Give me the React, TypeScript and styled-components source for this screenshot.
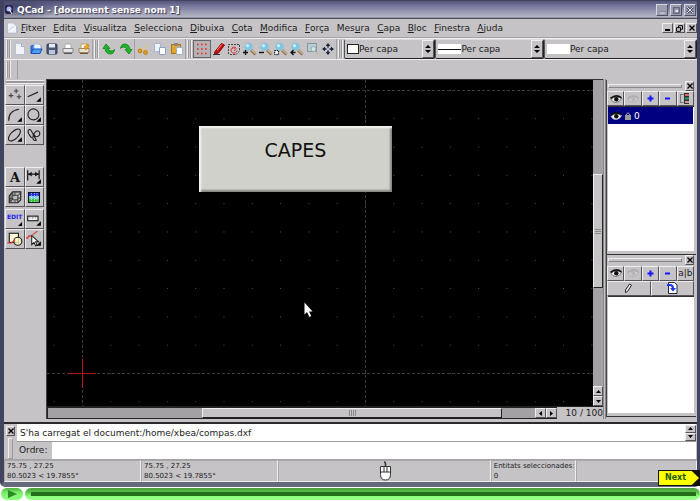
import React from "react";
import styled, { createGlobalStyle, css } from "styled-components";

const grey = "#c5c3c5";
const light = "#efeeef";
const ink = "#1c1b1e";

const GlobalStyle = createGlobalStyle`
  * { box-sizing: border-box; }
  body { margin: 0; background: #fff; }
  body, button, input, select { font-family: "DejaVu Sans", sans-serif; font-size: 9px; line-height: 12px; color: ${ink}; }
  button { padding: 0; margin: 0; border: 0; background: none; }
  svg { display: block; flex: none; }
`;

const raised = css`
  background: ${grey};
  border: 1px solid;
  border-color: ${light} #555357 #555357 ${light};
`;

const Page = styled.div`
  position: relative;
  display: flex;
  flex-direction: column;
  min-height: 100vh;
`;

const Window = styled.main`
  flex: 1;
  display: flex;
  flex-direction: column;
  background: ${grey};
  border: solid #41445e;
  border-width: 1px 3px 5px 4px;
  border-bottom-color: #66697c;
  border-radius: 0 0 5px 5px;
`;

const TitleBar = styled.header`
  display: flex;
  align-items: center;
  gap: 3px;
  height: 18px;
  padding-right: 1px;
  background: radial-gradient(ellipse 50px 14px at 14px 5px, #45466a, transparent),
    linear-gradient(#55567a, #73739a 25%, #9a9bb2 60%, #b5b7c3 90%, #4b4e62 95%);
`;

const Title = styled.h1`
  flex: 1;
  margin: 0;
  font-size: 9px;
  line-height: 14px;
  color: #fff;
  text-shadow: 1px 1px 1px #333452;
`;

const TitleButtons = styled.div`
  display: flex;
  gap: 2px;
`;

const TitleButton = styled.button`
  display: flex;
  align-items: center;
  justify-content: center;
  width: 12px;
  height: 12px;
  background: #9c9db0;
  border: 1px solid;
  border-color: #d6d7e0 #4d4f66 #4d4f66 #d6d7e0;
`;

const MenuBar = styled.nav`
  display: flex;
  align-items: center;
  justify-content: space-between;
  height: 19px;
  padding-left: 2px;
  border-bottom: 1px solid #a4a2a4;
`;

const MenuItems = styled.div`
  flex: 1;
  display: flex;
  justify-content: space-between;
  max-width: 482px;
  margin: 0 auto 0 3px;
`;

const MenuItem = styled.button`
  line-height: 14px;
  white-space: nowrap;
`;

const SmallButton = styled.button<{ $w?: number }>`
  ${raised}
  display: flex;
  flex: none;
  align-items: center;
  justify-content: center;
  width: ${(p) => p.$w ?? 10}px;
  height: 10px;
`;

const MdiButtons = styled.div`
  display: flex;
  gap: 1px;
`;

const Toolbar = styled.div<{ $h: number }>`
  display: flex;
  align-items: stretch;
  height: ${(p) => p.$h}px;
  padding-left: 1px;
  border-top: 1px solid ${light};
`;

const Grip = styled.span`
  flex: none;
  width: 5px;
  margin: 1px 1px 1px 1px;
  border: solid ${light};
  border-width: 0 1px;
  background: linear-gradient(90deg, #999799 1px, ${grey} 1px, ${grey} 2px, #999799 2px);
`;

const ToolGroup = styled.div<{ $w: number }>`
  display: flex;
  align-items: center;
  width: ${(p) => p.$w}px;
  border-right: 1px solid #a09ea0;
`;

const ToolButton = styled.button<{ $on?: boolean }>`
  flex: 1;
  display: flex;
  align-items: center;
  justify-content: center;
  height: 18px;
  ${(p) => p.$on && css`border: 1px solid #666; background: #b4b2b4;`}
`;

const Combo = styled.label<{ $grow: number }>`
  display: flex;
  flex: ${(p) => p.$grow} 1 0;
  align-items: center;
  min-width: 0;
  padding-left: 2px;
  border: 1px solid;
  border-color: #dddcdd #222 #222 #555;
  border-radius: 2px;
`;

const Select = styled.select`
  appearance: none;
  flex: 1;
  min-width: 0;
  border: 0;
  padding: 0;
  background: transparent;
`;

const Stepper = styled.span`
  ${raised}
  display: flex;
  align-self: stretch;
  align-items: center;
  justify-content: center;
  width: 12px;
`;

const Body = styled.div`
  flex: 1;
  display: flex;
  min-height: 0;
`;

const Tools = styled.aside`
  width: 42px;
  padding: 1px 2px 0 1px;
`;

const ToolsGrip = styled.div`
  height: 4px;
  margin: 0 0 1px 1px;
  border: solid ${light};
  border-width: 1px 0;
  background: #9a989a;
`;

const ToolGrid = styled.div<{ $after?: number }>`
  display: grid;
  grid-template-columns: 1fr 1fr;
  grid-auto-rows: 20px;
  margin-bottom: ${(p) => p.$after ?? 0}px;
`;

const CadTool = styled.button`
  ${raised}
  display: flex;
  align-items: center;
  justify-content: center;
`;

const Work = styled.section`
  flex: 1;
  display: flex;
  flex-direction: column;
  min-width: 0;
  border-left: 1px solid #444;
  border-top: 1px solid #333;
`;

const ViewRow = styled.div`
  flex: 1;
  display: flex;
  min-height: 0;
`;

const Canvas = styled.div`
  position: relative;
  flex: 1;
  background: #000;
  overflow: hidden;
`;

const Drawing = styled.svg`
  position: absolute;
  inset: 0;
  width: 100%;
  height: 100%;
`;

const Caption = styled.div`
  position: absolute;
  left: 152px;
  top: 46px;
  width: 193px;
  height: 66px;
  padding-top: 12px;
  text-align: center;
  font-size: 19px;
  line-height: 24px;
  color: #111;
  background: #d0d1ca;
  box-shadow: inset 2px 2px 2px #f4f4f0, inset -2px -2px 2px #85867f;
`;

const Pointer = styled.svg`
  position: absolute;
  left: 257px;
  top: 222px;
`;

const Scroll = styled.div<{ $v?: boolean }>`
  flex: ${(p) => (p.$v ? "none" : "1")};
  display: flex;
  flex-direction: ${(p) => (p.$v ? "column" : "row")};
  ${(p) => (p.$v ? "width: 10px;" : "height: 12px;")}
  background: #a3a1a3;
  border: solid #222;
  border-width: ${(p) => (p.$v ? "0" : "1px 0 1px 1px")};
`;

const Track = styled.span<{ $grow: number }>`
  flex: ${(p) => p.$grow} 1 0;
`;

const Thumb = styled.span<{ $grow: number }>`
  flex: ${(p) => p.$grow} 1 0;
  display: flex;
  align-items: center;
  justify-content: center;
  background: ${grey};
  border: 1px solid;
  border-color: ${light} #222 #222 ${light};
`;

const BottomRow = styled.div`
  display: flex;
  height: 13px;
  border-top: 1px solid #222;
`;

const Ratio = styled.span`
  width: 46px;
  text-align: right;
`;

const Docks = styled.aside`
  width: 94px;
  display: flex;
  flex-direction: column;
  padding: 1px 1px 2px 0;
  border-left: 3px double #888;
`;

const Dock = styled.section<{ $grow: number }>`
  flex: ${(p) => p.$grow} 1 0;
  display: flex;
  flex-direction: column;
  border-left: 1px solid #444;
  border-bottom: 1px solid #333;
`;

const DockHead = styled.header`
  display: flex;
  align-items: center;
  gap: 3px;
  height: 11px;
  padding: 0 2px 0 1px;
`;

const DockGrip = styled.span`
  flex: 1;
  height: 4px;
  border: 1px solid;
  border-color: ${light} #888 #888 ${light};
`;

const DockRow = styled.div<{ $cols: number }>`
  display: grid;
  grid-template-columns: repeat(${(p) => p.$cols}, 1fr);
  grid-auto-rows: 15px;
  padding-right: 2px;
`;

const List = styled.ul`
  flex: 1;
  margin: 0 2px 3px 1px;
  padding: 0;
  list-style: none;
  background: #fff;
  border-top: 1px solid #333;
`;

const Layer = styled.li`
  display: flex;
  align-items: center;
  gap: 2px;
  height: 17px;
  margin-right: 1px;
  padding-left: 2px;
  color: #fff;
  background: #000080;
`;

const Command = styled.section`
  display: flex;
  height: 37px;
  margin-top: 3px;
  border-top: 2px solid #2a292c;
`;

const CommandGrip = styled.div`
  display: flex;
  flex-direction: column;
  align-items: center;
  gap: 2px;
  width: 13px;
  padding-top: 2px;
`;

const VerticalGrip = styled.span`
  flex: 1;
  width: 5px;
  border: 1px solid;
  border-color: ${light} #999 #999 ${light};
`;

const CommandMain = styled.div`
  flex: 1;
  display: flex;
  flex-direction: column;
  padding-right: 1px;
`;

const Log = styled.div`
  display: flex;
  align-items: center;
  height: 18px;
  background: #fff;
  border-bottom: 1px solid #999;
`;

const LogText = styled.output`
  flex: 1;
  padding-left: 3px;
`;

const LogSteps = styled.div`
  display: flex;
  flex-direction: column;
  width: 11px;
`;

const StepButton = styled.button`
  ${raised}
  display: flex;
  align-items: center;
  justify-content: center;
  height: 8px;
`;

const Prompt = styled.div`
  flex: 1;
  display: flex;
  align-items: stretch;
`;

const PromptLabel = styled.label`
  width: 35px;
  padding: 2px 0 0 2px;
`;

const PromptInput = styled.input`
  flex: 1;
  min-width: 0;
  border: 0;
  padding: 0 2px;
  background: #fff;
  outline: none;
`;

const Status = styled.footer`
  display: flex;
  height: 23px;
  border-top: 1px solid #a3a1a3;
  font-size: 7px;
  line-height: 10px;
`;

const StatusCell = styled.div<{ $grow: number }>`
  flex: ${(p) => p.$grow} 1 0;
  display: flex;
  flex-direction: column;
  align-items: flex-start;
  justify-content: center;
  padding-left: 2px;
  white-space: nowrap;
  border: 1px solid;
  border-color: #aaa8aa ${light} ${light} #aaa8aa;
`;

const StatusMouse = styled(StatusCell)`
  align-items: center;
`;

const NextButton = styled.button`
  position: absolute;
  right: 0;
  bottom: 15px;
  width: 42px;
  height: 16px;
  padding: 1px;
  background: #111;
`;

const NextFace = styled.span`
  display: block;
  height: 14px;
  padding-left: 6px;
  font-size: 8px;
  line-height: 14px;
  font-weight: bold;
  text-align: left;
  color: #1c5a00;
  background: #ffff00;
  clip-path: polygon(0 0, 82% 0, 100% 50%, 82% 100%, 0 100%);
`;

const Player = styled.div`
  display: flex;
  gap: 2px;
  height: 14px;
  padding: 1px 0 1px 1px;
`;

const Play = styled.button`
  display: flex;
  align-items: center;
  justify-content: center;
  width: 22px;
  border-radius: 6px;
  background: linear-gradient(#4fb03e, #7cf06c 40%, #8fff80);
`;

const Progress = styled.div`
  flex: 1;
  padding: 4px 4px 4px 6px;
  border-radius: 6px;
  background: linear-gradient(#4c9e3c, #58b848 30%, #8cff7c 70%, #9cff8e);
`;

const ProgressLine = styled.div`
  height: 4px;
  background: #237019;
`;

type Dir = "up" | "down" | "left" | "right";
const arrows: Record<Dir, string> = {
  up: "M0 4 L2.5 1 L5 4Z",
  down: "M0 1 L2.5 4 L5 1Z",
  left: "M4 0 L1 2.5 L4 5Z",
  right: "M1 0 L4 2.5 L1 5Z",
};
const Arrow = ({ dir }: { dir: Dir }) => (
  <svg width="5" height="5"><path d={arrows[dir]} fill="#000" /></svg>
);
const Cross = () => (
  <svg width="6" height="6"><path d="M.5.5l5 5M5.5.5l-5 5" stroke="#000" strokeWidth="1.3" /></svg>
);
const UpDown = () => (
  <svg width="6" height="10"><path d="M0 4L3 1l3 3zM0 6l3 3 3-3z" fill="#000" /></svg>
);

const Icon = ({ children, size = 14 }: { children: React.ReactNode; size?: number }) => (
  <svg width={size} height={size} viewBox="0 0 14 14" fill="none" stroke="#222" aria-hidden="true">{children}</svg>
);

const Sheet = () => (
  <Icon><path d="M2.500 1.500h6l3 3v8h-9z" fill="#f1f3f9" stroke="#b9bfd0" /><path d="M8.500 1.500v3h3" fill="#dde2ee" stroke="#a5abc0" /></Icon>
);
const Lens = ({ children }: { children?: React.ReactNode }) => (
  <Icon>
    <path d="M8 8l4.500 4.500" stroke="#7b624a" strokeWidth="2.600" /><path d="M8 7.500l4.500 4.500" stroke="#d8b287" strokeWidth="1.400" />
    <circle cx="5.500" cy="4.700" r="3.800" fill="#78c9ec" stroke="#9dbccb" /><circle cx="4.500" cy="3.700" r="1.600" fill="#c8efff" stroke="none" />
    {children}
  </Icon>
);
const Eye = ({ off, onDark }: { off?: boolean; onDark?: boolean }) => (
  <svg width="12" height="10" viewBox="0 0 12 10" fill="none">
    <path d="M1 5.500Q6 .5 11.500 4.500Q10 8.500 5.500 8.500Q2.500 8.300 1 5.500Z" fill={off ? "#d2d0d2" : "#eee"} stroke={off ? "#aaa8aa" : onDark ? "#bbc" : "#555"} strokeWidth=".8" />
    <path d="M.5 4.500Q6-.5 11.500 3.800" stroke={off ? "#b0aeb0" : "#111"} strokeWidth="1.600" />
    <circle cx="6.300" cy="5.200" r="2.200" fill={off ? "#b8b6b8" : "#111"} />
  </svg>
);
const Sign = ({ minus }: { minus?: boolean }) => (
  <svg width="7" height="7"><path d={minus ? "M1 3.500h5" : "M.5 3.500h6M3.500.5v6"} stroke="#1414ff" strokeWidth="2" /></svg>
);
const Corner = () => <path d="M13 9v4H9z" fill="#000" stroke="none" />;

const fileTools: [string, React.ReactNode][] = [
  ["Nou", <Sheet />],
  ["Obre", <Icon><path d="M2 11V4l4-1 1 1.500h5v3" fill="#397fe2" stroke="#1d57b5" /><path d="M5 2h5l2 2v4H5z" fill="#e9f2ff" stroke="#9fb6d8" /><path d="M2 11.500L4 7h9l-2 4.500z" fill="#4f9cf4" stroke="#1753b8" /></Icon>],
  ["Desa", <Icon><rect x="2" y="2" width="10" height="10" rx="1" fill="#4d5872" stroke="#333c55" /><path d="M4 2h6v3.500H4z" fill="#e5ebf7" stroke="none" /><path d="M4 8h6v4H4z" fill="#b8c5dc" stroke="none" /></Icon>],
  ["Imprimeix", <Icon><path d="M4 2h6v5H4z" fill="#fff" stroke="#aaa" /><path d="M2 6.500h10v4H2z" fill="#e3e3e3" stroke="#888" /><path d="M3 11.500h8" stroke="#555" /></Icon>],
  ["Previsualitza", <Icon><path d="M4 2h6v5H4z" fill="#fff" stroke="#c59c58" /><path d="M2 6.500h10v4H2z" fill="#e7dfd0" stroke="#9b8865" /><path d="M3 11.500h8" stroke="#6f5a36" /><path d="M7 5l4-3 1 2-3 4z" fill="#f0a51d" stroke="#c98411" strokeWidth=".7" /></Icon>],
];
const undoTools: [string, React.ReactNode][] = [
  ["Desfés", <Icon><path d="M1 6.500L4 2l4 4.500-2.300-.2Q6.500 9 9 9q2.300 0 3.500-1.500Q12 12 8 12 3.500 11.500 3 6.500z" fill="#22b52c" stroke="#0b8216" strokeWidth=".8" /></Icon>],
  ["Refés", <Icon><path d="M13 7.500L10 12 6 7.500l2.300.2Q7.500 5 5 5 2.700 5 1.500 6.500 2 2 6 2q4.500.5 5 5.500z" fill="#22b52c" stroke="#0b8216" strokeWidth=".8" /></Icon>],
];
const clipTools: [string, React.ReactNode][] = [
  ["Retalla", <Icon><path d="M9.500 2.500v6M4 5.500l6 4" stroke="#e1c28a" strokeWidth="1.300" /><circle cx="4" cy="9" r="1.900" fill="#e3a22b" stroke="#b97b10" /><circle cx="9.500" cy="10.500" r="1.900" fill="#e3a22b" stroke="#b97b10" /></Icon>],
  ["Copia", <Icon><path d="M1.500 1.500h6v8h-6z" fill="#eef2fa" stroke="#a9b4ca" /><path d="M6.500 5.500h6v7h-6z" fill="#fff" stroke="#8ea2c8" /></Icon>],
  ["Enganxa", <Icon><rect x="1.500" y="2.500" width="9" height="9" fill="#dfa62f" stroke="#a8761a" /><path d="M4 1h4v3H4z" fill="#888" stroke="none" /><path d="M6.500 5.500h6v7h-6z" fill="#fff" stroke="#9fb0cf" /></Icon>],
];
const viewTools: [string, React.ReactNode][] = [
  ["Graella", <Icon><path d="M2 2.500h11M2 7h11M2 11.500h11" stroke="#e22" strokeWidth="1.600" strokeDasharray="1.600 2.400" /></Icon>],
  ["Esborrany", <Icon><path d="M3 9.500L9.500 1.500l3 1.500L6.500 11l-4 1z" fill="#c51414" stroke="#8b0a0a" /><path d="M5 8l5-5.500" stroke="#ff8a80" /><path d="M1 12.500h7" stroke="#333" /></Icon>],
  ["Redibuixa", <Icon><path d="M1.500 12V2.500H12.500V9L9 12.500H2" stroke="#444" strokeDasharray="2 1" /><path d="M9.500 6.500a3 3 0 1 0 .5 2M5 6.500q1.500-1.500 3 0t-1 2.500" stroke="#d33" /></Icon>],
  ["Amplia", <Lens><path d="M0 10.500h5M2.500 8v5" stroke="#111" strokeWidth="1.400" /></Lens>],
  ["Redueix", <Lens><path d="M0 10.500h5" stroke="#111" strokeWidth="1.400" /></Lens>],
  ["Zoom automàtic", <Lens><rect x=".6" y="8.600" width="4" height="4" fill="#eee" stroke="#111" strokeDasharray="1.500 .7" /></Lens>],
  ["Zoom previ", <Lens><path d="M5.500 10.500H1M3.500 8L1 10.500 3.500 13" stroke="#111" strokeWidth="1.300" /></Lens>],
  ["Zoom finestra", <Icon><rect x="1.500" y="1.500" width="9" height="8" fill="#b8cdd0" stroke="#82999e" /><circle cx="7.500" cy="7" r="2.500" fill="#d7e4e6" stroke="#8eaab2" /><path d="M9.500 9.500l2.500 2.500" stroke="#c5b49d" strokeWidth="1.500" /></Icon>],
  ["Desplaça", <Icon><path d="M7 1l2.300 3H4.700zM7 13l2.300-3H4.700zM1 7l3-2.300v4.600zM13 7l-3-2.300v4.600z" fill="#17213c" stroke="none" /><path d="M7 3v2.500M7 8.500V11M3 7h2.500M8.500 7H11" stroke="#17213c" strokeWidth="1.500" /></Icon>],
];

const drawTools: [string, React.ReactNode][] = [
  ["Punts", <Icon size={16}><path d="M8 1.500v4M6 3.500h4M3.500 5.500v4M1.500 7.500h4M10.500 6.500v4M8.500 8.500h4" stroke="#444" /></Icon>],
  ["Línies", <Icon size={16}><path d="M1.500 8.500L10.500 4.500" /><Corner /></Icon>],
  ["Arcs", <Icon size={16}><path d="M1.500 12Q1 3.500 10.500 2" /><Corner /></Icon>],
  ["Cercles", <Icon size={16}><circle cx="6.500" cy="6.500" r="4.800" /><Corner /></Icon>],
  ["El·lipses", <Icon size={16}><ellipse cx="6.500" cy="7" rx="6.700" ry="3.200" transform="rotate(-45 6.500 7)" /><Corner /></Icon>],
  ["Splines", <Icon size={16}><path d="M5 9.500Q1 5 2 3q1.500-2 3 1l4 7.500q-2 1-3-1.500Q6 6 8.500 4q2.500-1.500 3.500 1 .5 3-2.500 3.500-2 0-2.500-2" /></Icon>],
];
const textTools: [string, React.ReactNode][] = [
  ["Text", <svg width="16" height="16"><text x="8" y="13" textAnchor="middle" fontFamily="DejaVu Serif" fontWeight="bold" fontSize="13" fill="#111">A</text></svg>],
  ["Acotació", <Icon size={16}><path d="M1.500 1v9M11.500 1v8M2 4.500h9" stroke="#111" /><path d="M2 4.500l3-2v4zM11 4.500l-3-2v4z" fill="#111" stroke="none" /><Corner /></Icon>],
  ["Ratllat", <Icon size={16}><path d="M2 6l3-3.500h7v7L9.500 12H2z" fill="#bbb" stroke="#222" /><path d="M5 5.500h4.500v4H5zM5 3v3M2 8.500h3M9.500 6L12 3M2 11l3-2M9.500 9v3M3.500 4v8M7 3v2.500M7 10v2M9.500 8H12" stroke="#333" strokeWidth=".8" /></Icon>],
  ["Imatge", <svg width="12" height="11"><rect x=".5" y=".5" width="11" height="10" fill="#fff" stroke="#112" /><rect x="1" y="1" width="10" height="3" fill="#2233dd" /><rect x="1" y="4" width="10" height="3" fill="#79cce4" /><rect x="1" y="7" width="10" height="3" fill="#3bc13b" /><path d="M3.500 1v9M6.500 1v9M9 1v9" stroke="#fff" strokeOpacity=".6" strokeDasharray="1 1" /></svg>],
];
const editTools: [string, React.ReactNode][] = [
  ["Edició", <svg width="16" height="14"><text x="0" y="7" fontFamily="DejaVu Sans" fontSize="6" fontWeight="bold" fill="#2020f0">EDIT</text><path d="M15 10v4h-4z" fill="#000" /></svg>],
  ["Mesura", <Icon size={16}><rect x="1.500" y="4.500" width="9" height="4" fill="#eee" /><path d="M3.500 5v1M6 5v1.500M8.500 5v1" stroke="#666" strokeWidth=".7" /><Corner /></Icon>],
  ["Bloc", <Icon size={16}><rect x="2" y="2" width="8" height="8" fill="#fffdd8" /><circle cx="9.500" cy="9" r="3.500" fill="#fff9c2" fillOpacity=".8" /><path d="M0 10.500h4l3-3" stroke="#e33" /></Icon>],
  ["Selecciona entitat", <Icon size={16}><path d="M0 6l5-2 5-4M3 3.500L1 7" stroke="#d44" /><path d="M5 4v8l2-2 1.500 3 1.300-.6L8.400 9.500H11z" fill="#fff" stroke="#222" strokeWidth=".9" /><Corner /></Icon>],
];

const menus: [string, number][] = [
  ["Fitxer", 0], ["Edita", 0], ["Visualitza", 0], ["Selecciona", 0], ["Dibuixa", 0], ["Cota", 0], ["Modifica", 0],
  ["Força", 0], ["Mesura", 3], ["Capa", 0], ["Bloc", 0], ["Finestra", 0], ["Ajuda", 0],
];

const ToolButtons = ({ items, active }: { items: [string, React.ReactNode][]; active?: string }) => (
  <>{items.map(([name, icon]) => <ToolButton key={name} aria-label={name} $on={name === active}>{icon}</ToolButton>)}</>
);
const CadTools = ({ items, after }: { items: [string, React.ReactNode][]; after?: number }) => (
  <ToolGrid $after={after}>{items.map(([name, icon]) => <CadTool key={name} aria-label={name}>{icon}</CadTool>)}</ToolGrid>
);

const Choice = ({ label, grow, children }: { label: string; grow: number; children: React.ReactNode }) => (
  <Combo $grow={grow}>
    {children}
    <Select aria-label={label}><option>Per capa</option></Select>
    <Stepper><UpDown /></Stepper>
  </Combo>
);

export default function App() {
  return (
    <Page>
      <GlobalStyle />
      <Window>
        <TitleBar>
          <svg width="10" height="12"><rect x="1" y="1" width="8" height="9" rx="2" fill="#232452" /><circle cx="5" cy="5" r="2.500" fill="#aebcf2" /><path d="M5 5l3 5" stroke="#fff" /></svg>
          <Title>QCad - [document sense nom 1]</Title>
          <TitleButtons>
            <TitleButton aria-label="Minimitza"><svg width="7" height="7"><path d="M0 5h7v2H0z" fill="#e6e7ee" stroke="#55576d" strokeWidth=".6" /></svg></TitleButton>
            <TitleButton aria-label="Maximitza"><svg width="7" height="7"><rect x=".7" y=".7" width="5.600" height="5.600" fill="none" stroke="#55576d" /><rect x="2.500" y="3" width="2.500" height="2" fill="#e6e7ee" /></svg></TitleButton>
            <TitleButton aria-label="Tanca"><svg width="8" height="8"><path d="M1 1l6 6M7 1L1 7" stroke="#50526a" strokeWidth="2.800" /><path d="M1 1l6 6M7 1L1 7" stroke="#dfe0e9" /></svg></TitleButton>
          </TitleButtons>
        </TitleBar>
        <MenuBar>
          <Icon size={12}><path d="M1.500 1h7l4 4v8h-11z" fill="#f2f4fa" stroke="#a6adc0" /><path d="M3 10l6-5" stroke="#b6c2dd" /></Icon>
          <MenuItems>
            {menus.map(([name, key]) => (
              <MenuItem key={name}>{name.slice(0, key)}<u>{name[key]}</u>{name.slice(key + 1)}</MenuItem>
            ))}
          </MenuItems>
          <MdiButtons>
            <SmallButton $w={11} aria-label="Minimitza document"><svg width="5" height="6"><path d="M0 5h5" stroke="#000" strokeWidth="2" /></svg></SmallButton>
            <SmallButton $w={11} aria-label="Restaura document"><svg width="7" height="7"><path d="M2.500 2.500V.7h4v3.500H5M.5 2.700h4v3.600h-4z" fill="none" stroke="#000" /></svg></SmallButton>
            <SmallButton $w={11} aria-label="Tanca document"><Cross /></SmallButton>
          </MdiButtons>
        </MenuBar>
        <Toolbar $h={21}>
          <Grip />
          <ToolGroup $w={81}><ToolButtons items={fileTools} /></ToolGroup>
          <Grip />
          <ToolGroup $w={35}><ToolButtons items={undoTools} /></ToolGroup>
          <ToolGroup $w={51}><ToolButtons items={clipTools} /></ToolGroup>
          <Grip />
          <ToolGroup $w={144}><ToolButtons items={viewTools} active="Graella" /></ToolGroup>
          <Grip />
          <Choice label="Color" grow={88}><svg width="12" height="10"><rect x=".5" y=".5" width="11" height="9" fill="#fff" stroke="#222" /></svg></Choice>
          <Choice label="Tipus de línia" grow={105}><svg width="23" height="10"><rect width="23" height="10" fill="#fff" /><path d="M0 5.500h23" stroke="#111" /></svg></Choice>
          <Choice label="Gruix" grow={150}><svg width="23" height="10"><rect width="23" height="10" fill="#fff" /></svg></Choice>
        </Toolbar>
        <Toolbar $h={20}><Grip /><ToolGroup $w={6} /></Toolbar>
        <Body>
          <Tools>
            <ToolsGrip />
            <CadTools items={drawTools} after={22} />
            <CadTools items={textTools} after={2} />
            <CadTools items={editTools} />
          </Tools>
          <Work>
            <ViewRow>
              <Canvas>
                <Drawing>
                  <defs>
                    <pattern id="dots" x="21.300" y="279.300" width="28.300" height="28.300" patternUnits="userSpaceOnUse">
                      <path d="M13.700 14.200h1M14.200 13.700v1" stroke="#555" />
                    </pattern>
                  </defs>
                  <rect width="100%" height="100%" fill="url(#dots)" />
                  <path d="M35.500 0V900M318.500 0V900M0 10.500H2000M0 293.500H2000" stroke="#3c3c3c" strokeDasharray="3 2" />
                  <path d="M21 293.500h28M35.500 279v29" stroke="#b01818" />
                </Drawing>
                <Caption>CAPES</Caption>
                <Pointer width="9" height="16"><path d="M.5.5v12l2.500-2.500 2.500 5 1.700-1L5 9.500h3.500z" fill="#fff" /></Pointer>
              </Canvas>
              <Scroll $v>
                <Track $grow={95} />
                <Thumb $grow={112}><svg width="6" height="7"><path d="M0 1.500h6M0 3.500h6M0 5.500h6" stroke="#888" /></svg></Thumb>
                <Track $grow={99} />
                <SmallButton aria-label="Amunt"><Arrow dir="up" /></SmallButton>
                <SmallButton aria-label="Avall"><Arrow dir="down" /></SmallButton>
              </Scroll>
            </ViewRow>
            <BottomRow>
              <Scroll>
                <Track $grow={154} />
                <Thumb $grow={298}><svg width="8" height="6"><path d="M1.500 0v6M3.500 0v6M5.500 0v6M7.500 0v6" stroke="#888" /></svg></Thumb>
                <Track $grow={33} />
                <SmallButton $w={11} aria-label="Esquerra"><Arrow dir="left" /></SmallButton>
                <SmallButton $w={11} aria-label="Dreta"><Arrow dir="right" /></SmallButton>
              </Scroll>
              <Ratio>10 / 100</Ratio>
            </BottomRow>
          </Work>
          <Docks>
            <Dock $grow={175}>
              <DockHead><DockGrip /><SmallButton $w={9} aria-label="Tanca capes"><Cross /></SmallButton></DockHead>
              <DockRow $cols={5}>
                <CadTool aria-label="Mostra les capes"><Eye /></CadTool>
                <CadTool aria-label="Amaga les capes"><Eye off /></CadTool>
                <CadTool aria-label="Afegeix capa"><Sign /></CadTool>
                <CadTool aria-label="Treu capa"><Sign minus /></CadTool>
                <CadTool aria-label="Edita capa"><svg width="10" height="11"><path d="M.5 1v9M.5 1.500h3M.5 9.500h3" stroke="#777" /><rect x="4" y="0" width="5" height="11" fill="#333" /><path d="M5 2h4" stroke="#d66" strokeWidth="2" /><path d="M5 5.500h4" stroke="#2a9b62" strokeWidth="2" /><path d="M5 9h4" stroke="#c99" strokeWidth="2" /></svg></CadTool>
              </DockRow>
              <List>
                <Layer>
                  <Eye onDark />
                  <svg width="8" height="10"><path d="M2.500 5V3q1.500-2.500 3 0v2" fill="none" stroke="#aaa" /><rect x="1" y="4" width="6" height="5" fill="#999" /></svg>
                  0
                </Layer>
              </List>
            </Dock>
            <Dock $grow={162}>
              <DockHead><DockGrip /><SmallButton $w={9} aria-label="Tanca blocs"><Cross /></SmallButton></DockHead>
              <DockRow $cols={5}>
                <CadTool aria-label="Mostra els blocs"><Eye /></CadTool>
                <CadTool aria-label="Amaga els blocs"><Eye off /></CadTool>
                <CadTool aria-label="Afegeix bloc"><Sign /></CadTool>
                <CadTool aria-label="Treu bloc"><Sign minus /></CadTool>
                <CadTool>a|b</CadTool>
              </DockRow>
              <DockRow $cols={2}>
                <CadTool aria-label="Edita bloc"><svg width="9" height="11"><path d="M1.500 9.500V7L5.500 1l2 1.200L3.500 8.500z" fill="#eee" stroke="#222" /></svg></CadTool>
                <CadTool aria-label="Insereix bloc"><svg width="11" height="12"><path d="M1.500.5h6l2.500 2.500v8.500H1.500z" fill="#fff" stroke="#224" /><path d="M0 3h3q3 0 3 3.500" fill="none" stroke="#1a34e8" strokeWidth="2" /><path d="M3 6h6L6 9.500z" fill="#1a34e8" /></svg></CadTool>
              </DockRow>
              <List />
            </Dock>
          </Docks>
        </Body>
        <Command>
          <CommandGrip><SmallButton $w={9} aria-label="Tanca ordres"><Cross /></SmallButton><VerticalGrip /></CommandGrip>
          <CommandMain>
            <Log>
              <LogText>S'ha carregat el document:/home/xbea/compas.dxf</LogText>
              <LogSteps>
                <StepButton aria-label="Línia anterior"><Arrow dir="up" /></StepButton>
                <StepButton aria-label="Línia següent"><Arrow dir="down" /></StepButton>
              </LogSteps>
            </Log>
            <Prompt>
              <PromptLabel htmlFor="ordre">Ordre:</PromptLabel>
              <PromptInput id="ordre" type="text" />
            </Prompt>
          </CommandMain>
        </Command>
        <Status>
          <StatusCell $grow={137}><span>75.75 , 27.25</span><span>80.5023 &lt; 19.7855°</span></StatusCell>
          <StatusCell $grow={137}><span>75.75 , 27.25</span><span>80.5023 &lt; 19.7855°</span></StatusCell>
          <StatusMouse $grow={215}>
            <svg width="13" height="20"><path d="M6.500 6V3q0-2-1.500-2" fill="none" stroke="#333" strokeWidth="1.500" /><path d="M1.500 5.500h10v8q0 5.500-5 5.500t-5-5.500z" fill="#fff" stroke="#333" /><path d="M1.500 11h10M5 5v6M8 5v6" stroke="#333" /></svg>
          </StatusMouse>
          <StatusCell $grow={83}><span>Entitats seleccionades:</span><span>0</span></StatusCell>
          <StatusCell $grow={121} />
        </Status>
      </Window>
      <Player>
        <Play aria-label="Reprodueix"><svg width="9" height="8"><path d="M0 0l9 4-9 4z" fill="#2d8a22" /></svg></Play>
        <Progress><ProgressLine /></Progress>
      </Player>
      <NextButton><NextFace>Next</NextFace></NextButton>
    </Page>
  );
}
